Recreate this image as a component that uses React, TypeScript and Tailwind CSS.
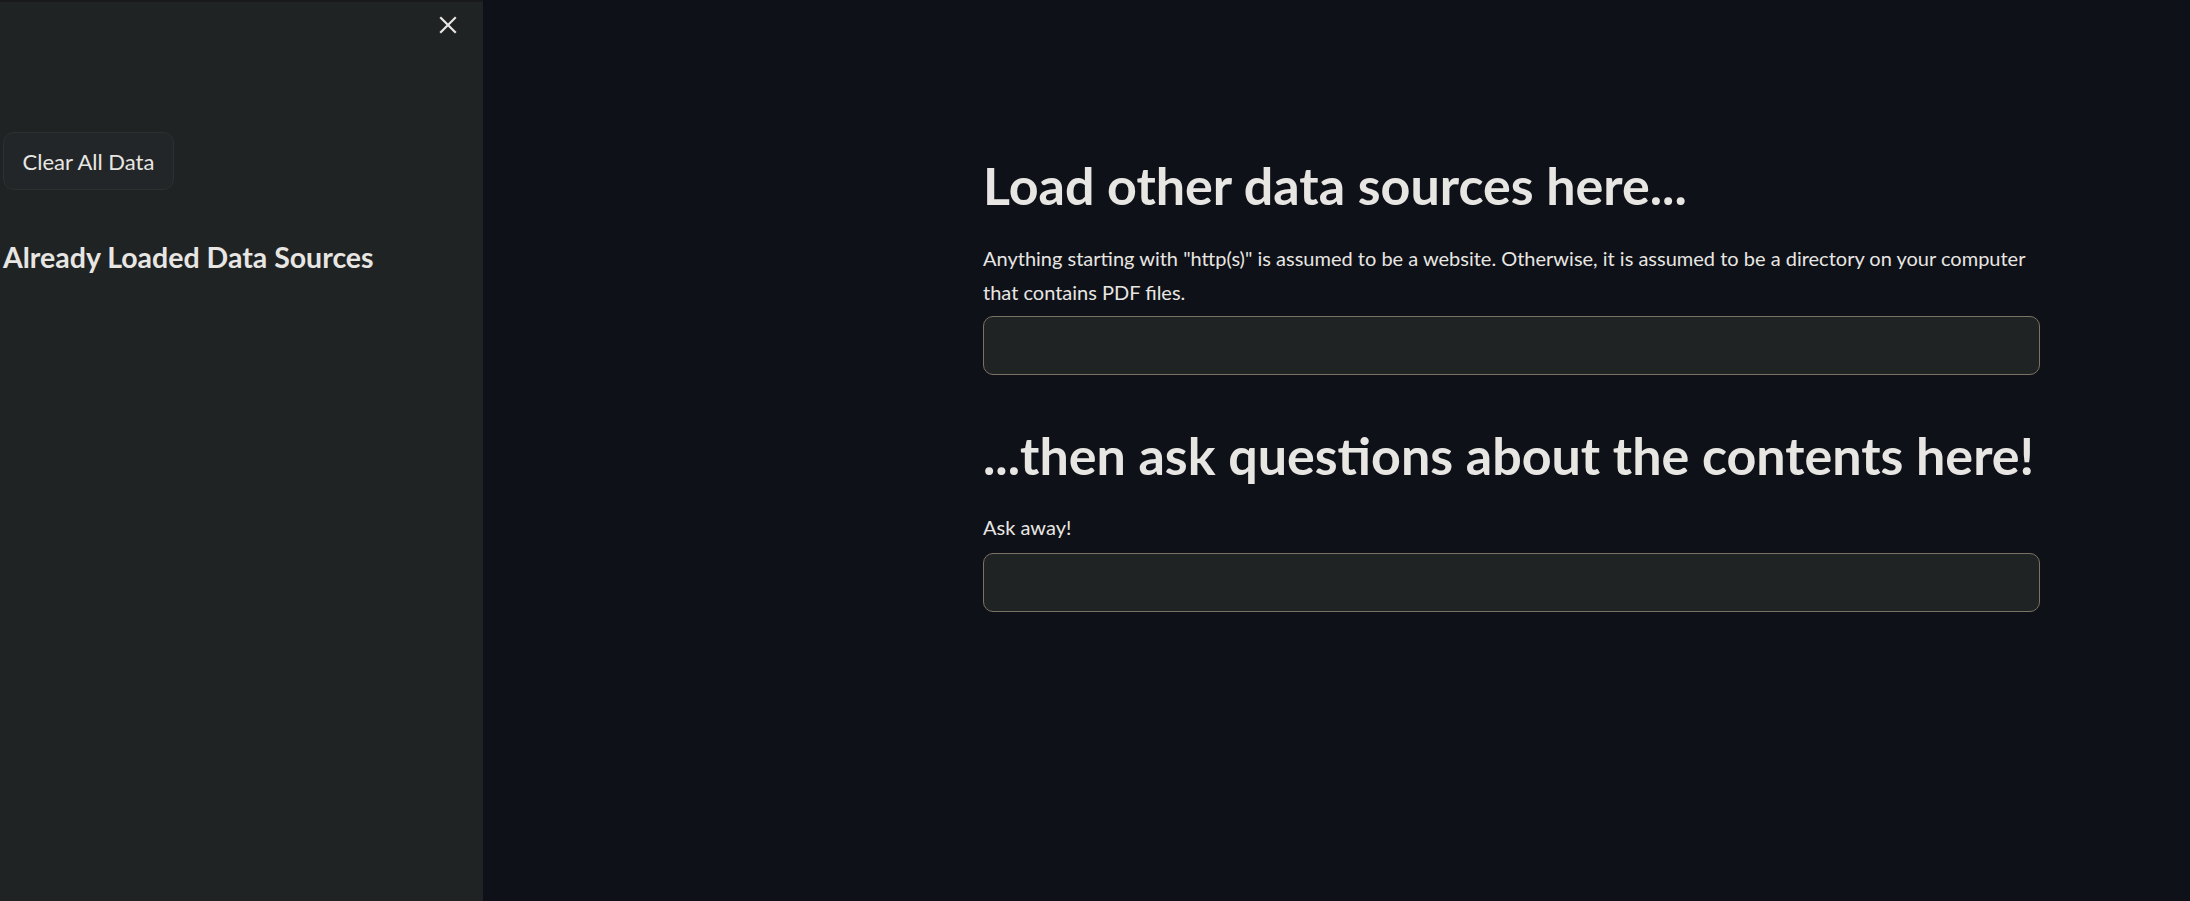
import React from "react";

export default function App() {
  return (
    <div className="flex h-[901px] w-full overflow-hidden bg-[#0e1117] text-[#e8e6e3]" style={{ fontFamily: "Lato, 'Noto Sans', sans-serif" }}>
      <aside className="relative w-[483px] shrink-0 border-t-2 border-[#181a1b] bg-[#202324]">
        <button className="absolute left-[438px] top-[13px] flex h-[20px] w-[20px] items-center justify-center text-[#e8e6e3]" aria-label="Close">
          <svg width="18" height="18" viewBox="0 0 18 18" fill="none" stroke="currentColor" strokeWidth="2.2" strokeLinecap="square">
            <path d="M2 2 L16 16 M16 2 L2 16" />
          </svg>
        </button>
        <div className="flex flex-col pl-[3px] pt-[130px]">
          <button className="flex h-[58px] w-[171px] items-center justify-center rounded-[11px] border border-[#2c3032] bg-[#232628] text-[22px] text-[#e8e6e3]">
            Clear All Data
          </button>
          <h3 className="mt-[47px] text-[28.5px] font-bold leading-[40px] text-[#e8e6e3]">Already Loaded Data Sources</h3>
        </div>
      </aside>
      <main className="flex-1">
        <div className="ml-[500px] flex w-[1057px] flex-col pt-[153px]">
          <h2 className="text-[52px] font-bold leading-[64px] text-[#e8e6e3]">Load other data sources here...</h2>
          <p className="mt-[24px] text-[20px] leading-[34px] text-[#e8e6e3]">
            Anything starting with "http(s)" is assumed to be a website. Otherwise, it is assumed to be a directory on your computer
            <br />
            that contains PDF files.
          </p>
          <div className="mt-[7px] h-[59px] w-full rounded-[10px] border border-[#7a7264] bg-[#202324]" />
          <h2 className="mt-[48px] text-[52px] font-bold leading-[64px] text-[#e8e6e3]">...then ask questions about the contents here!</h2>
          <p className="mt-[23px] text-[20px] leading-[34px] text-[#e8e6e3]">Ask away!</p>
          <div className="mt-[9px] h-[59px] w-full rounded-[10px] border border-[#7a7264] bg-[#202324]" />
        </div>
      </main>
    </div>
  );
}
